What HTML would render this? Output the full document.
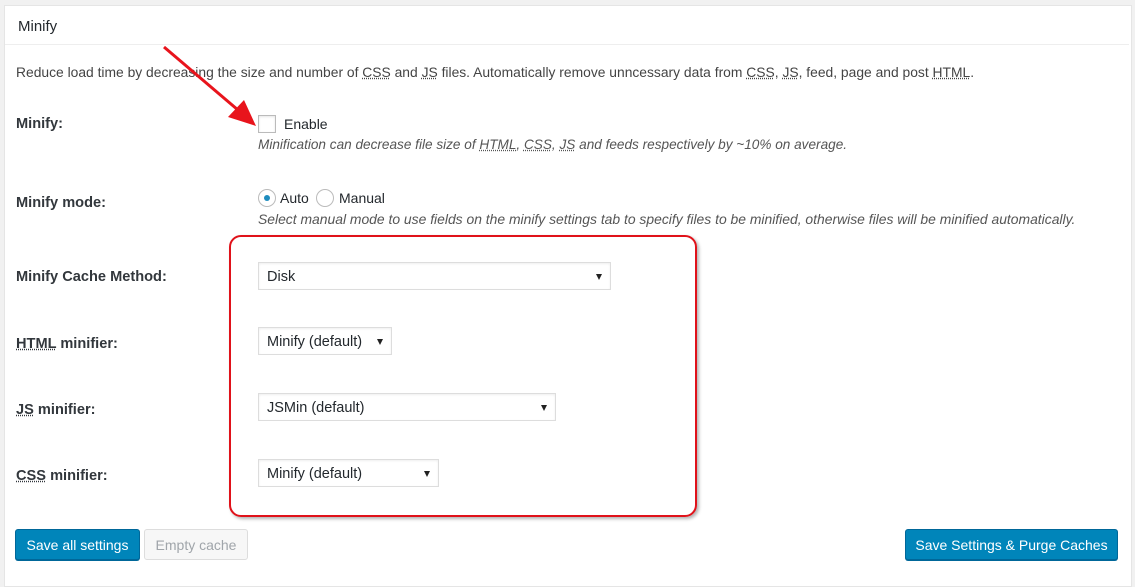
<!DOCTYPE html>
<html><head><style>
body{margin:0;width:1135px;height:577px;background:#f1f1f1;font-family:"Liberation Sans",sans-serif;color:#23282d;position:relative;overflow:hidden}
.panel{position:absolute;left:4px;top:5px;width:1126px;height:580px;background:#fff;border:1px solid #e5e5e5}
.hd{position:absolute;left:0;top:0;width:100%;height:38px;border-bottom:1px solid #eee}
.t{position:absolute;white-space:nowrap;font-size:14px}
abbr{text-decoration:underline dotted}
.lbl{font-weight:bold;font-size:14.6px;color:#32373c}
.desc{font-style:italic;font-size:13.6px;color:#555}
.sel{position:absolute;height:28px;border:1px solid #ddd;box-shadow:inset 0 1px 2px rgba(0,0,0,.07);background:#fff;font-size:14.5px;line-height:28px;padding-left:8px;box-sizing:border-box}
.sel:after{content:"";position:absolute;right:8px;top:11px;border:3px solid transparent;border-top:6px solid #222;border-bottom:0}
.btn{position:absolute;height:31px;line-height:30px;font-size:14px;border-radius:3px;box-sizing:border-box;text-align:center}
.pri{background:#0085ba;border:1px solid #006799;color:#fff;box-shadow:0 1px 0 #006799}
</style></head><body>
<div class="panel"></div>
<div class="hd" style="left:5px;top:6px;width:1124px"></div>
<div class="t" style="left:18px;top:18px;font-size:15px">Minify</div>
<div class="t" style="left:16px;top:64px;color:#444;font-size:13.85px">Reduce load time by decreasing the size and number of <abbr>CSS</abbr> and <abbr>JS</abbr> files. Automatically remove unncessary data from <abbr>CSS</abbr>, <abbr>JS</abbr>, feed, page and post <abbr>HTML</abbr>.</div>
<div class="t lbl" style="left:16px;top:116px">Minify:</div>
<div style="position:absolute;left:258px;top:115px;width:16px;height:16px;border:1px solid #bbb;box-shadow:inset 0 1px 2px rgba(0,0,0,.1)"></div>
<div class="t" style="left:284px;top:116px">Enable</div>
<div class="t desc" style="left:258px;top:137px">Minification can decrease file size of <abbr>HTML</abbr>, <abbr>CSS</abbr>, <abbr>JS</abbr> and feeds respectively by ~10% on average.</div>
<div class="t lbl" style="left:16px;top:195px">Minify mode:</div>
<div style="position:absolute;left:258px;top:189px;width:16px;height:16px;border:1px solid #bbb;border-radius:50%"><div style="position:absolute;left:5px;top:5px;width:6px;height:6px;border-radius:50%;background:#1e8cbe"></div></div>
<div class="t" style="left:280px;top:190px">Auto</div>
<div style="position:absolute;left:316px;top:189px;width:16px;height:16px;border:1px solid #bbb;border-radius:50%"></div>
<div class="t" style="left:339px;top:190px">Manual</div>
<div class="t desc" style="left:258px;top:211px;font-size:13.9px">Select manual mode to use fields on the minify settings tab to specify files to be minified, otherwise files will be minified automatically.</div>
<div class="t lbl" style="left:16px;top:269px">Minify Cache Method:</div>
<div class="sel" style="left:258px;top:262px;width:353px">Disk</div>
<div class="t lbl" style="left:16px;top:336px"><abbr>HTML</abbr> minifier:</div>
<div class="sel" style="left:258px;top:327px;width:134px">Minify (default)</div>
<div class="t lbl" style="left:16px;top:402px"><abbr>JS</abbr> minifier:</div>
<div class="sel" style="left:258px;top:393px;width:298px">JSMin (default)</div>
<div class="t lbl" style="left:16px;top:468px"><abbr>CSS</abbr> minifier:</div>
<div class="sel" style="left:258px;top:459px;width:181px">Minify (default)</div>
<div style="position:absolute;left:229px;top:235px;width:464px;height:278px;border:2px solid #e0121a;border-radius:12px;box-shadow:2px 2px 3px rgba(0,0,0,.3)"></div>
<svg style="position:absolute;left:0;top:0" width="300" height="140"><line x1="164" y1="47" x2="238" y2="110" stroke="#e8141c" stroke-width="3"/><polygon points="256,126 228,117 244,100" fill="#e8141c"/></svg>
<div class="btn pri" style="left:15px;top:529px;width:125px">Save all settings</div>
<div class="btn" style="left:144px;top:529px;width:104px;background:#f7f7f7;border:1px solid #ddd;color:#a0a5aa">Empty cache</div>
<div class="btn pri" style="left:905px;top:529px;width:213px">Save Settings &amp; Purge Caches</div>
</body></html>
